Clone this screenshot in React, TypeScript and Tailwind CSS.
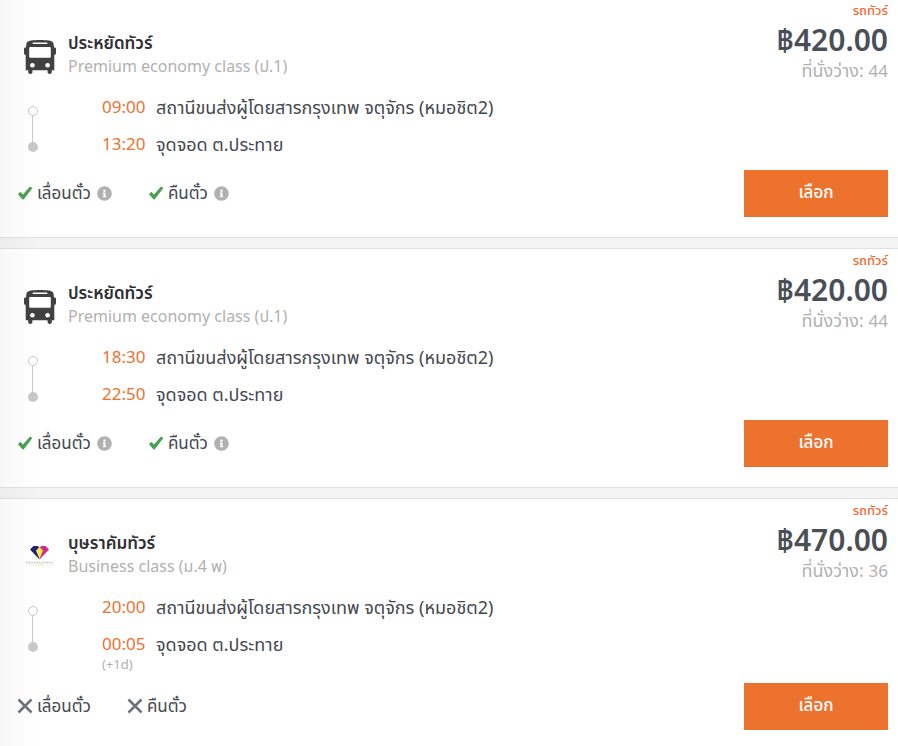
import { FaInfoCircle } from "react-icons/fa";

type Trip = {
  id: string;
  operator: string;
  logo: "bus" | "gem";
  seatClass: string;
  departTime: string;
  departStation: string;
  arriveTime: string;
  arriveStation: string;
  dayOffset?: string;
  price: string;
  seatsLeft: number;
  flexible: boolean;
};

const trips: Trip[] = [
  {
    id: "t1",
    operator: "ประหยัดทัวร์",
    logo: "bus",
    seatClass: "Premium economy class (ป.1)",
    departTime: "09:00",
    departStation: "สถานีขนส่งผู้โดยสารกรุงเทพ จตุจักร (หมอชิต2)",
    arriveTime: "13:20",
    arriveStation: "จุดจอด ต.ประทาย",
    price: "฿420.00",
    seatsLeft: 44,
    flexible: true,
  },
  {
    id: "t2",
    operator: "ประหยัดทัวร์",
    logo: "bus",
    seatClass: "Premium economy class (ป.1)",
    departTime: "18:30",
    departStation: "สถานีขนส่งผู้โดยสารกรุงเทพ จตุจักร (หมอชิต2)",
    arriveTime: "22:50",
    arriveStation: "จุดจอด ต.ประทาย",
    price: "฿420.00",
    seatsLeft: 44,
    flexible: true,
  },
  {
    id: "t3",
    operator: "บุษราคัมทัวร์",
    logo: "gem",
    seatClass: "Business class (ม.4 พ)",
    departTime: "20:00",
    departStation: "สถานีขนส่งผู้โดยสารกรุงเทพ จตุจักร (หมอชิต2)",
    arriveTime: "00:05",
    arriveStation: "จุดจอด ต.ประทาย",
    dayOffset: "(+1d)",
    price: "฿470.00",
    seatsLeft: 36,
    flexible: false,
  },
];

function BusIcon() {
  return (
    <svg viewBox="0 0 32 36" className="h-9 w-8" aria-hidden="true">
      <path
        d="M7 1.6C12 .8 20 .8 25 1.6 28 2.2 29.5 3 29.7 5.5L30 8.5H30.5C31.5 8.5 32 9 32 10V14C32 15.2 31.3 16 30.3 16V31.2H27.8V33.3C27.8 35.6 23.6 35.6 23.6 33.3V31.2H8.4V33.3C8.4 35.6 4.2 35.6 4.2 33.3V31.2H1.7V16C.7 16 0 15.2 0 14V10C0 9 .5 8.5 1.5 8.5H2L2.3 5.5C2.5 3 4 2.2 7 1.6Z"
        fill="#414141"
      />
      <rect x="8.5" y="3.5" width="15" height="1.6" rx="0.8" fill="#fff" />
      <rect x="5.2" y="8" width="21.6" height="10.8" rx="1" fill="#fff" />
      <circle cx="8.4" cy="26.2" r="2.3" fill="#fff" />
      <circle cx="23.6" cy="26.2" r="2.3" fill="#fff" />
    </svg>
  );
}

function GemLogo() {
  return (
    <svg viewBox="0 0 32 36" className="h-9 w-8" aria-hidden="true">
      <path d="M9.5 7H15.5V20.5L6 10.5Z" fill="#20207c" />
      <path d="M15.5 7H21.5L25 10.5 15.5 20.5Z" fill="#cf2b85" />
      <path d="M13.5 7H17.5L15.5 8.5Z" fill="#fff" />
      <path d="M15.5 8 19 11.5 15.5 20 12 11.5Z" fill="#f8ea4e" />
      <path d="M2 23.5H29" stroke="#c4c4c4" strokeWidth="1.5" strokeDasharray="1.6 1" />
      <path d="M2 25.8H9M22 25.8H29" stroke="#dedede" strokeWidth="0.5" />
      <path d="M11 25.8H20" stroke="#ece58e" strokeWidth="1.2" strokeDasharray="1.5 1" />
    </svg>
  );
}

function CheckIcon() {
  return (
    <svg viewBox="0 0 16 16" className="size-4" fill="#4c9f50" aria-hidden="true">
      <path d="M1 9.2 3.2 6.8 6 9.6 13 1.6 15.4 3 6.6 14.6 5.6 14.6Z" />
    </svg>
  );
}

function CrossIcon() {
  return (
    <svg viewBox="0 0 16 16" className="size-4" stroke="#6d7278" strokeWidth="2.5" aria-hidden="true">
      <path d="M1.5 1.5 14.5 14.5M14.5 1.5 1.5 14.5" />
    </svg>
  );
}

function Policy({ label, allowed }: { label: string; allowed: boolean }) {
  return (
    <li className="flex items-center gap-1">
      {allowed ? <CheckIcon /> : <CrossIcon />}
      {label}
      {allowed && (
        <button type="button" aria-label={label} className="ml-0.5">
          <FaInfoCircle className="size-[15px] text-[#b1b1b1]" />
        </button>
      )}
    </li>
  );
}

function TripCard({ trip }: { trip: Trip }) {
  return (
    <article className="flex justify-between border-y border-[#dfe1e5] bg-white pr-2.5 pb-5">
      <div className="pt-8 pb-3">
        <header className="flex gap-3 pl-6">
          <div className="pt-2">{trip.logo === "bus" ? <BusIcon /> : <GemLogo />}</div>
          <div>
            <h2 className="text-[17px] leading-6 font-semibold text-[#2f2f33]">{trip.operator}</h2>
            <p className="text-base leading-[22px] text-[#b1b1b1]">{trip.seatClass}</p>
          </div>
        </header>

        <div className="mt-[18px] flex pl-7">
          <div className="flex h-[57px] w-[74px] flex-col items-start pt-[11px]">
            <span className="size-2.5 shrink-0 rounded-full border border-[#c8c8c8]" />
            <span className="ml-1 w-px flex-1 bg-[#c8c8c8]" />
            <span className="size-2.5 shrink-0 rounded-full bg-[#c8c8c8]" />
          </div>
          <ul className="flex flex-col gap-[13px]">
            <li className="flex gap-2.5 leading-6">
              <time className="w-11 text-[#ee7130]">{trip.departTime}</time>
              <span className="text-lg leading-6">{trip.departStation}</span>
            </li>
            <li className="flex gap-2.5 leading-6">
              <div className="w-11">
                <time className="block text-[#ee7130]">{trip.arriveTime}</time>
                {trip.dayOffset && (
                  <span className="-mb-[3px] block text-[13px] leading-4 text-[#b1b1b1]">{trip.dayOffset}</span>
                )}
              </div>
              <span className="text-lg leading-6">{trip.arriveStation}</span>
            </li>
          </ul>
        </div>

        <ul className="mt-[25px] flex gap-9 pl-[17px] leading-6">
          <Policy label="เลื่อนตั๋ว" allowed={trip.flexible} />
          <Policy label="คืนตั๋ว" allowed={trip.flexible} />
        </ul>
      </div>

      <div className="flex flex-col items-end justify-between pt-[3px]">
        <div className="text-right">
          <p className="text-[13px] leading-4 font-medium text-[#ee6a35]">รถทัวร์</p>
          <p className="mt-0.5 text-[30px] leading-10 font-semibold text-[#4a4f57]">{trip.price}</p>
          <p className="text-lg leading-5 text-[#b1b1b1]">
            ที่นั่งว่าง: <span className="text-[17px]">{trip.seatsLeft}</span>
          </p>
        </div>
        <button type="button" className="h-[47px] w-36 bg-[#ed722e] pb-1 font-medium text-white hover:bg-[#dd6421]">
          เลือก
        </button>
      </div>
    </article>
  );
}

export default function App() {
  return (
    <main className="relative -mt-0.5 flex min-h-screen flex-col gap-2.5 overflow-hidden bg-[#f4f4f4] font-['Noto_Sans','Noto_Sans_Thai',sans-serif] text-[17px] text-[#44484f]">
      {trips.map((trip) => (
        <TripCard key={trip.id} trip={trip} />
      ))}
      <div className="pointer-events-none absolute inset-y-0 left-0 w-9 bg-linear-to-r from-black/3 to-transparent" />
    </main>
  );
}
